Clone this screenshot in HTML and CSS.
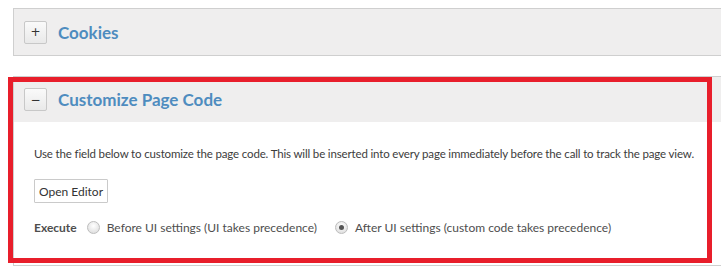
FILE: index.html
```html
<!DOCTYPE html>
<html>
<head>
<meta charset="utf-8">
<link rel="stylesheet" href="styles.css">
</head>
<body>
<div class="page">
  <section class="panel collapsed">
    <div class="panel-head">
      <button class="toggle">+</button>
      <h2 class="title">Cookies</h2>
    </div>
  </section>
  <section class="panel open">
    <div class="panel-head">
      <button class="toggle">&minus;</button>
      <h2 class="title">Customize Page Code</h2>
    </div>
    <div class="panel-body">
      <p class="desc">Use the field below to customize the page code. This will be inserted into every page immediately before the call to track the page view.</p>
      <button class="editor-btn">Open Editor</button>
      <div class="exec-row">
        <span class="exec-label">Execute</span>
        <label class="radio"><span class="dot"></span>Before UI settings (UI takes precedence)</label>
        <label class="radio"><span class="dot checked"></span>After UI settings (custom code takes precedence)</label>
      </div>
    </div>
    <div class="highlight"></div>
  </section>
</div>
</body>
</html>
```
FILE: styles.css
```css
html, body {
  margin: 0;
  padding: 0;
  background: #fff;
  overflow: hidden;
}
body {
  font-family: Lato, "Open Sans", sans-serif;
  color: #4b4b4b;
}
.page {
  padding: 8px 0 0 13px;
}
.panel {
  position: relative;
  border: 1px solid #cfcfcf;
  border-right: none;
  background: #efeeee;
}
.panel.open {
  margin-top: 20px;
}
.panel-head {
  display: flex;
  align-items: center;
  height: 46px;
  padding-left: 10px;
  gap: 11px;
  background: #efeeee;
}
.open .panel-head {
  height: 45px;
}
.toggle {
  width: 23px;
  height: 23px;
  padding: 0;
  border: 1px solid #c8c8c8;
  border-radius: 2px;
  background: linear-gradient(#fafafa, #e9e9e9);
  font-family: "DejaVu Sans", sans-serif;
  font-size: 12px;
  line-height: 20px;
  color: #333;
}
.title {
  margin: 0;
  font-size: 17px;
  font-weight: 700;
  color: #4e8cbf;
}
.panel-body {
  background: #fff;
  padding: 23px 20px 0 20px;
  height: 120px;
}
.desc {
  margin: 0;
  font-size: 11.5px;
  letter-spacing: -0.15px;
  line-height: 18px;
  white-space: nowrap;
  color: #3c3c3c;
}
.editor-btn {
  display: block;
  margin-top: 16px;
  width: 74px;
  height: 24px;
  padding: 0;
  border: 1px solid #cacaca;
  border-radius: 1px;
  background: #fff;
  font-family: Lato, "Open Sans", sans-serif;
  font-size: 12px;
  color: #333;
}
.exec-row {
  display: flex;
  align-items: center;
  margin-top: 17px;
  font-size: 12px;
  color: #4e4e4e;
}
.exec-label {
  font-weight: 700;
  margin-right: 10px;
}
.radio {
  display: flex;
  align-items: center;
  margin-right: 18px;
}
.dot {
  width: 11px;
  height: 11px;
  border-radius: 50%;
  border: 1px solid #bdbdbd;
  background: radial-gradient(circle at 50% 35%, #fff, #d8d8d8);
  margin-right: 7px;
  position: relative;
}
.dot.checked::after {
  content: "";
  position: absolute;
  left: 3px;
  top: 3px;
  width: 5px;
  height: 5px;
  border-radius: 50%;
  background: #555;
}
.highlight {
  position: absolute;
  left: -6px;
  top: 0;
  width: 694px;
  height: 176px;
  border: 5px solid #e81e2b;
  pointer-events: none;
}
```
